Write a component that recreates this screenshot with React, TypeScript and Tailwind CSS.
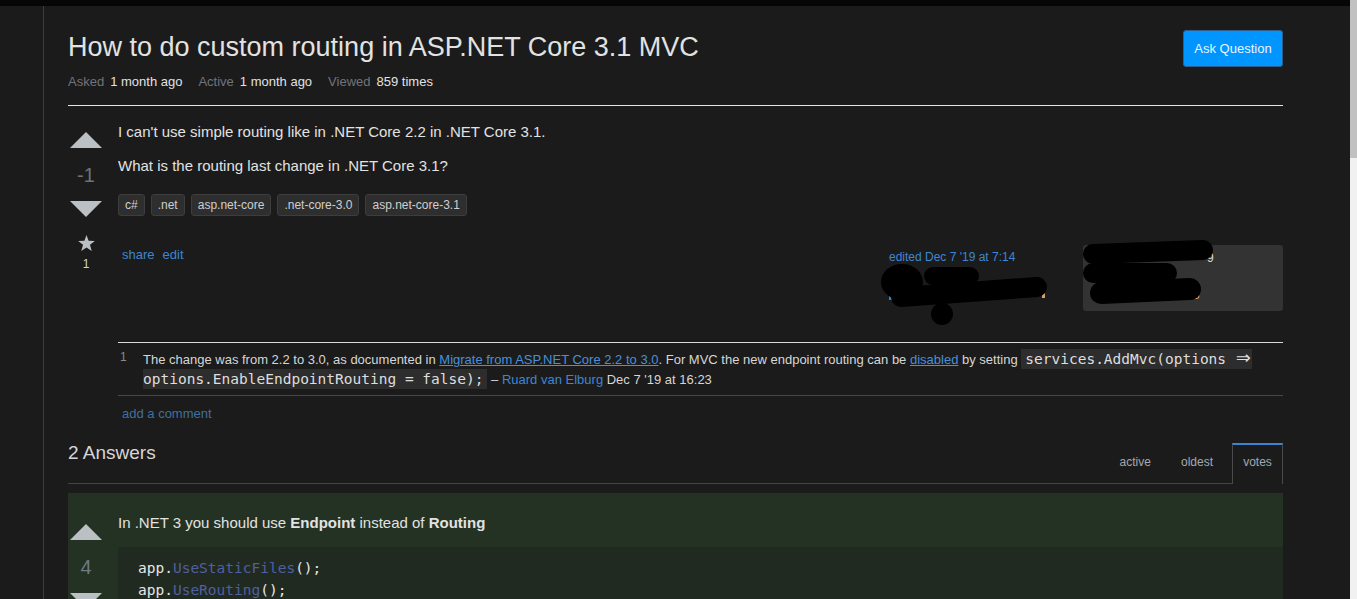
import React from "react";

const Arrow = ({ down = false }: { down?: boolean }) => (
  <svg width="36" height="16" viewBox="0 0 36 16" className="block">
    {down ? (
      <polygon points="2,0 34,0 18,16" fill="#bbc0c4" />
    ) : (
      <polygon points="2,16 34,16 18,0" fill="#bbc0c4" />
    )}
  </svg>
);

const Star = () => (
  <svg width="17" height="16" viewBox="0 0 24 23" className="block">
    <polygon
      points="12,0 15,8.2 24,8.5 17,14 19.5,23 12,17.8 4.5,23 7,14 0,8.5 9,8.2"
      fill="#bbc0c4"
    />
  </svg>
);

const Tag = ({ t }: { t: string }) => (
  <span className="inline-block h-[22px] leading-[20px] px-[6px] border border-[#3d3d3d] bg-[#2e2e2e] rounded-[3px] text-[12px] text-[#cfcfcf]">
    {t}
  </span>
);

const Code = ({ children }: { children: React.ReactNode }) => (
  <code className="font-['DejaVu_Sans_Mono',monospace] text-[14.5px] leading-[14px] bg-[#2d2d2d] text-[#dedede] px-[4px] py-[2px]">
    {children}
  </code>
);

export default function App() {
  return (
    <div className="relative w-[1357px] h-[599px] overflow-hidden flex bg-[#1b1b1b] font-['Liberation_Sans',Arial,sans-serif]">
      <div className="flex-1 flex flex-col min-w-0">
        <div className="h-[6px] bg-[#060606] shrink-0" />
        <div className="flex flex-1 min-h-0">
          <div className="w-[43px] shrink-0" />
          <div className="w-px bg-[#3d3d3d] shrink-0" />
          <main className="pl-[24px] w-[1239px] shrink-0">
            <div className="w-[1215px]">
              {/* header */}
              <div className="pt-[24px] flex justify-between items-start">
                <h1 className="text-[27px] leading-[35px] text-[#e2e2e2] font-normal">
                  How to do custom routing in ASP.NET Core 3.1 MVC
                </h1>
                <button className="w-[100px] h-[37px] bg-[#0095ff] border border-[#2f5f8a] rounded-[3px] text-[13px] text-[#eef4ff]">
                  Ask Question
                </button>
              </div>
              <div className="mt-[6px] h-[17px] leading-[17px] text-[13px] flex">
                <span className="text-[#6f757b] mr-[6px]">Asked</span>
                <span className="text-[#e2e2e2] mr-[16px]">1 month ago</span>
                <span className="text-[#6f757b] mr-[6px]">Active</span>
                <span className="text-[#e2e2e2] mr-[16px]">1 month ago</span>
                <span className="text-[#6f757b] mr-[6px]">Viewed</span>
                <span className="text-[#e2e2e2]">859 times</span>
              </div>
              <div className="mt-[15px] h-px bg-[#e4e4e4]" />

              {/* question */}
              <div className="pt-[16px] flex">
                <div className="w-[36px] shrink-0 flex flex-col items-center">
                  <div className="mt-[10px]">
                    <Arrow />
                  </div>
                  <div className="mt-[15px] text-[20px] leading-[24px] text-[#6a737c]">-1</div>
                  <div className="mt-[14px]">
                    <Arrow down />
                  </div>
                  <div className="mt-[18px]">
                    <Star />
                  </div>
                  <div className="mt-[6px] text-[12px] leading-[14px] text-[#d6d6d6]">1</div>
                </div>
                <div className="ml-[14px] flex-1 min-w-0">
                  <p className="text-[15px] leading-[20px] text-[#e2e2e2]">
                    I can't use simple routing like in .NET Core 2.2 in .NET Core 3.1.
                  </p>
                  <p className="mt-[14px] text-[15px] leading-[20px] text-[#e2e2e2]">
                    What is the routing last change in .NET Core 3.1?
                  </p>
                  <div className="mt-[18px] flex gap-[6px]">
                    <Tag t="c#" />
                    <Tag t=".net" />
                    <Tag t="asp.net-core" />
                    <Tag t=".net-core-3.0" />
                    <Tag t="asp.net-core-3.1" />
                  </div>
                  <div className="mt-[29px] flex items-start">
                    <div className="flex-1 pt-[1px] pl-[4px] text-[13px] leading-[17px] text-[#3c87d4] flex gap-[8px]">
                      <span>share</span>
                      <span>edit</span>
                    </div>
                    <div className="w-[194px] pt-[4px] text-[12px] leading-[16px] text-[#3c87d4]">
                      edited Dec 7 '19 at 7:14
                    </div>
                    <div className="w-[200px] h-[66px] bg-[#333333] rounded-[3px]" />
                  </div>

                  {/* comments */}
                  <div className="mt-[31px] border-t border-[#d9d9d9]">
                    <div className="pt-[7px] pb-[5px] flex border-b border-[#474747]">
                      <div className="w-[25px] shrink-0 pl-[2px] text-[12px] leading-[14px] text-[#8a8a8a]">1</div>
                      <div className="flex-1 text-[13px] leading-[20px] text-[#d6d6d6]">
                        The change was from 2.2 to 3.0, as documented in{" "}
                        <span className="text-[#4a90d9] underline">Migrate from ASP.NET Core 2.2 to 3.0</span>. For MVC
                        the new endpoint routing can be <span className="text-[#4a90d9] underline">disabled</span> by
                        setting{" "}
                        <Code>
                          services.AddMvc(options{" "}
                          <span className="inline-block w-[17px] text-center font-['DejaVu_Sans',sans-serif] text-[18px] leading-[14px]">⇒</span>{" "}
                          options.EnableEndpointRouting = false);
                        </Code>{" "}
                        – <span className="text-[#3c87d4]">Ruard van Elburg</span>{" "}
                        <span className="text-[#d6d6d6]">Dec 7 '19 at 16:23</span>
                      </div>
                    </div>
                    <div className="mt-[9px] pl-[4px] text-[13px] leading-[17px] text-[#41709f]">add a comment</div>
                  </div>
                </div>
              </div>

              {/* answers header */}
              <div className="mt-[21px] flex items-end">
                <div className="flex-1 h-[41px] flex justify-between border-b border-[#444]">
                  <div className="text-[19px] leading-[20px] text-[#d6d6d6]">2 Answers</div>
                  <div className="flex gap-[8px] mr-[8px]">
                    <div className="px-[11px] pt-[12px] text-[12px] leading-[15px] text-[#a3a9af]">active</div>
                    <div className="px-[11px] pt-[12px] text-[12px] leading-[15px] text-[#a3a9af]">oldest</div>
                  </div>
                </div>
                <div className="h-[41px] w-[51px] border-t-2 border-t-[#3b84d4] border-x border-x-[#4a4a4a] pt-[10px] text-center text-[12px] leading-[15px] text-[#a3a9af]">
                  votes
                </div>
              </div>

              {/* answer */}
              <div className="mt-[9px] bg-[#233223] pt-[20px] flex h-[200px]">
                <div className="w-[36px] shrink-0 flex flex-col items-center">
                  <div className="mt-[11px]">
                    <Arrow />
                  </div>
                  <div className="mt-[15px] text-[20px] leading-[24px] text-[#6f7a82]">4</div>
                  <div className="mt-[14px]">
                    <Arrow down />
                  </div>
                </div>
                <div className="ml-[14px] flex-1 min-w-0">
                  <p className="text-[15px] leading-[20px] text-[#e2e2e2]">
                    In .NET 3 you should use <b>Endpoint</b> instead of <b>Routing</b>
                  </p>
                  <pre className="mt-[14px] bg-[#212a21] pt-[10px] px-[20px] h-[200px] font-['DejaVu_Sans_Mono',monospace] text-[14.5px] leading-[22px] text-[#e6e6e6]">
                    app.<span className="text-[#4f5fa0]">UseStaticFiles</span>();{"\n"}
                    app.<span className="text-[#4f5fa0]">UseRouting</span>();{"\n"}
                    app.<span className="text-[#4f5fa0]">UseAuthorization</span>();
                  </pre>
                </div>
              </div>
            </div>
          </main>
        </div>
      </div>
      {/* scrollbar */}
      <div className="w-[7px] shrink-0 flex flex-col">
        <div className="h-[158px] bg-[#c1c1c1]" />
        <div className="flex-1 bg-[#f1f1f1]" />
      </div>

      {/* redaction scribbles */}
      <svg className="absolute left-0 top-0 pointer-events-none" width="1357" height="599">
        <rect x="889" y="292" width="4" height="8" fill="#1e88e5" />
        <rect x="1042" y="293" width="3" height="5" fill="#d9a066" />
        <text x="1207" y="262" fill="#dddddd" fontSize="12" fontFamily="Liberation Sans, Arial, sans-serif">9</text>
        <text x="1193" y="299" fill="#d4a373" fontSize="12" fontFamily="Liberation Sans, Arial, sans-serif">3</text>
        <g stroke="#000" strokeLinecap="round" fill="none">
          <ellipse cx="902" cy="282" rx="21" ry="18" fill="#000" stroke="none" />
          <line x1="933" y1="276" x2="970" y2="276" strokeWidth="18" />
          <line x1="901" y1="297" x2="1037" y2="287" strokeWidth="20" />
          <circle cx="942" cy="314" r="11" fill="#000" stroke="none" />
          <line x1="1093" y1="254" x2="1203" y2="250" strokeWidth="20" />
          <line x1="1093" y1="273" x2="1167" y2="273" strokeWidth="20" />
          <line x1="1101" y1="293" x2="1190" y2="289" strokeWidth="22" />
        </g>
      </svg>
    </div>
  );
}
